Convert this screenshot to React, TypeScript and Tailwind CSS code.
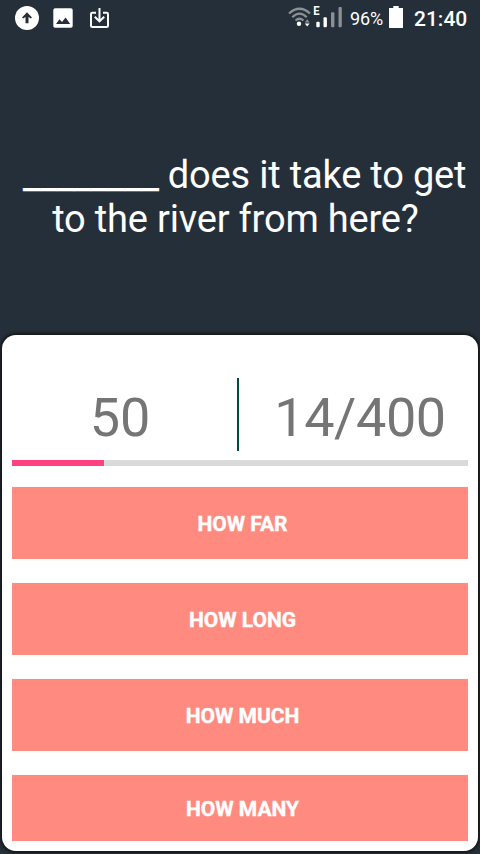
const answers = [
  { label: 'HOW FAR', size: 'h-[72px]' },
  { label: 'HOW LONG', size: 'h-[72px]' },
  { label: 'HOW MUCH', size: 'h-[72px]' },
  { label: 'HOW MANY', size: 'h-[66px]' },
];

function StatusBar() {
  return (
    <header className="flex h-[37px] shrink-0 items-start">
      <svg className="ml-[15px] mt-[6px] h-6 w-6 shrink-0" viewBox="0 0 24 24">
        <circle cx="12" cy="12" r="12" fill="#fff" />
        <path d="M12 6.300 17 11.500 15.800 12.600 13.500 11V17.200h-3V11L8.200 12.600 7 11.500z" fill="#252f3a" />
      </svg>
      <svg className="ml-[14px] mt-2 h-5 w-5 shrink-0" viewBox="0 0 20 20">
        <rect x="0.300" y="0.200" width="19.400" height="19.600" rx="1.800" fill="#fff" />
        <path d="M3 16 6.500 11.200 9 14 12.600 9.500 17.200 16z" fill="#252f3a" />
      </svg>
      <svg className="ml-[17px] mt-[7px] h-[22px] w-5 shrink-0" viewBox="0 0 20 22" fill="none" stroke="#fff" strokeWidth="2">
        <path d="M6 5.700H2.200Q1 5.700 1 7v11.700Q1 20 2.200 20h14.600Q18 20 18 18.700V7q0-1.300-1.200-1.300H13" />
        <path d="M9.500 1v13M4.800 9.800l4.700 4.600 4.700-4.600" />
      </svg>
      <svg className="ml-[178px] mt-[5px] h-6 w-[55px] shrink-0 overflow-visible" viewBox="0 0 55 24">
        <g fill="none" stroke="#899096" strokeWidth="2.300">
          <path d="M1 8.500Q11.500-1 22 8.500M4.300 12.200Q11.500 5 18.700 12.200M7.500 15.500Q11.500 12 15.500 15.500" />
        </g>
        <circle cx="11" cy="18.800" r="2.200" fill="#fff" />
        <path d="M16.800 17.500 19.200 14.300l2.400 3.200z" fill="#899096" />
        <path d="M16.800 18.500 19.200 21.500l2.400-3z" fill="#fff" />
        <text x="25.200" y="10.300" fill="#fff" fontFamily="Roboto, sans-serif" fontSize="12.500" fontWeight="700" textLength="6.300" lengthAdjust="spacingAndGlyphs">E</text>
        <rect x="28.300" y="16.700" width="3.400" height="5.600" rx="1" fill="#fff" />
        <rect x="35.500" y="12.200" width="3.400" height="10.100" rx="1" fill="#fff" />
        <rect x="43" y="7.200" width="3.400" height="15.100" rx="1" fill="#899096" />
        <rect x="50.500" y="2" width="3.300" height="20.300" rx="1" fill="#899096" />
      </svg>
      <span className="ml-[7px] mt-[8px] w-[33px] whitespace-nowrap text-[18px] leading-[21px] tracking-[-0.1px]">96%</span>
      <svg className="ml-[6px] mt-[6px] h-[22px] w-[14px] shrink-0" viewBox="0 0 14 22" fill="#fff">
        <path d="M4.300 0h5.400v2H14v20H0V2h4.300z" />
      </svg>
      <span className="ml-[11px] mt-[7px] whitespace-nowrap text-[21px] font-medium leading-[24px]">21:40</span>
    </header>
  );
}

export default function App() {
  return (
    <div className="flex h-[854px] w-[480px] flex-col overflow-hidden bg-[#252f3a] font-[Roboto,sans-serif] text-white">
      <StatusBar />
      <section className="h-[298px] shrink-0 pt-[116px] text-center text-[38px] leading-[44px] tracking-[-0.19px]">
        <p className="whitespace-nowrap">
          {'\u00a0'}
          <span className="[-webkit-text-stroke:0.3px_white]">________</span>
          {' does it take to get'}
          <br />
          {'to the river from here?\u00a0'}
        </p>
      </section>
      <main className="mx-[2px] flex h-[516px] shrink-0 flex-col rounded-[14px] bg-white px-[10px] pt-[43px] shadow-[0_0_3px_2px_#171717]">
        <div className="flex h-[73px] items-center text-[54px] leading-[63px] text-[#757575]">
          <span className="w-[225px] pr-[9px] pt-[5px] text-center">50</span>
          <span className="h-full w-[2px] bg-[#004d40]" />
          <span className="flex-1 pl-[13px] pt-[5px] text-center tracking-[-0.4px]">14/400</span>
        </div>
        <div className="mt-[9px] h-[6px] shrink-0 bg-[#dadada]">
          <div className="h-full w-[92px] bg-[#ff4081]" />
        </div>
        <div className="mt-[21px] flex flex-col gap-6">
          {answers.map(({ label, size }) => (
            <button key={label} className={`${size} bg-[#ff8a80] pl-[5px] pt-[2px] text-[21px] font-bold leading-[25px] [-webkit-text-stroke:0.4px_white]`}>
              {label}
            </button>
          ))}
        </div>
      </main>
    </div>
  );
}
